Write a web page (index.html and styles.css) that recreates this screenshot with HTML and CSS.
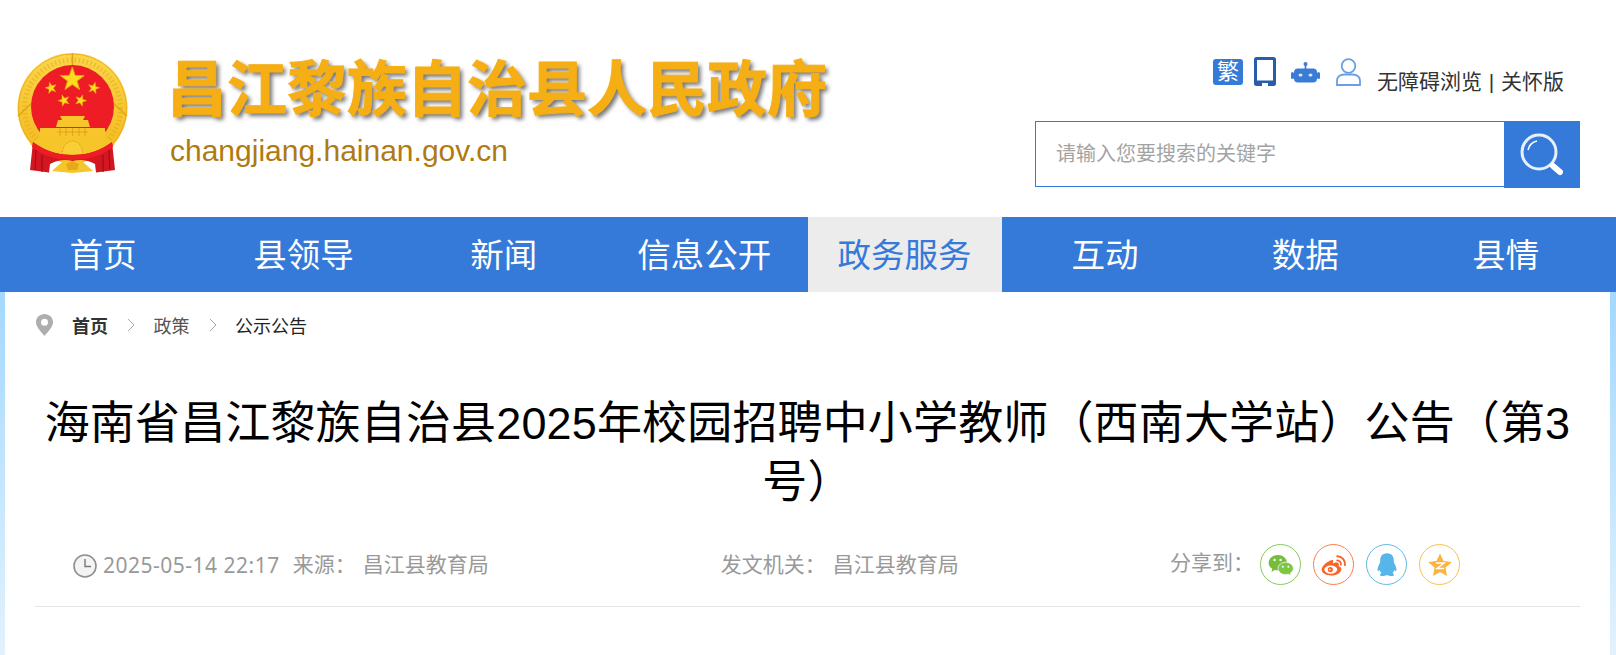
FILE: index.html
```html
<!DOCTYPE html>
<html lang="zh">
<head>
  <meta charset="UTF-8">
  <meta name="viewport" content="width=device-width, initial-scale=1.0">
  <title>昌江黎族自治县人民政府</title>
  <link rel="stylesheet" href="styles.css">
</head>
<body>
  <header class="header">
    <div class="brand">
      <svg class="emblem" viewBox="0 0 150 140" width="150" height="140">
        <defs>
          <linearGradient id="gold" x1="0" y1="0" x2="0" y2="1">
            <stop offset="0" stop-color="#fbd64a"/>
            <stop offset="1" stop-color="#f2b81e"/>
          </linearGradient>
          <polygon id="star" points="0,-1 .235,-.324 .951,-.309 .38,.124 .588,.809 0,.4 -.588,.809 -.38,.124 -.951,-.309 -.235,-.324"/>
        </defs>
        <circle cx="72.500" cy="68" r="55" fill="url(#gold)"/>
        <circle cx="72.500" cy="68" r="54" fill="none" stroke="#eaa914" stroke-width=".8"/>
        <circle cx="72.500" cy="68" r="48" fill="none" stroke="#e6a814" stroke-width="5" stroke-dasharray="1.500 2.500" opacity=".55"/>
        <path d="M18 76 L35 60 M127 76 L110 60 M72.500 13 V25" stroke="#e3a415" stroke-width="1.500"/>
        <circle cx="72.500" cy="66.500" r="41.500" fill="#ee1c25"/>
        <g fill="#fbdc1e" stroke="#e8a512" stroke-width=".08">
          <use href="#star" transform="translate(72.300 39.500) scale(12.500)"/>
          <use href="#star" transform="translate(51 48) rotate(-15) scale(6)"/>
          <use href="#star" transform="translate(93.700 48) rotate(15) scale(6)"/>
          <use href="#star" transform="translate(64 60.500) rotate(-20) scale(6)"/>
          <use href="#star" transform="translate(80.700 60.500) rotate(20) scale(6)"/>
        </g>
        <g fill="#f8c52c">
          <path d="M60 76 H85 L83 80 H88 L90 87 H56 L58 80 H62 Z"/>
          <rect x="40" y="88" width="65" height="9"/>
        </g>
        <path d="M57 92 H88 M60 88 v8 M66 88 v8 M72.500 88 v8 M79 88 v8 M85 88 v8" stroke="#dc9d12" stroke-width=".8"/>
        <path d="M40 97 H105 L115 104 Q96 122 72.500 122 Q49 122 30 104 Z" fill="#f6c52a"/>
        <path d="M62 115 a10.500 14 0 0 1 21 0 Z" fill="#f9cf38" stroke="#d9950f" stroke-width=".8" stroke-dasharray="2 1"/>
        <path d="M52 131 L63 121 H82 L93 131 L72.500 133 Z" fill="#f6c52a"/>
        <path d="M66 124 L72.500 121 L79 124 L77 130 H68 Z" fill="#e6a918"/>
        <path d="M33 102 Q50 115 72.500 115 Q95 115 112 102 L115 130 L96 132.500 L95 124 Q84 118 72.500 121 Q61 118 50 124 L49 132.500 L30 130 Z" fill="#d3161f"/>
        <path d="M33 102 Q50 115 72.500 115 Q95 115 112 102 L113 107 Q96 120 72.500 120 Q49 120 32 107 Z" fill="#ee1c25"/>
        <path d="M36 110 L35 130 M42 115 L42 132 M103 115 L103 132 M109 110 L110 130" stroke="#a50d16" stroke-width="1.200"/>
      </svg>
      <div class="site-name">
        <div class="site-title">昌江黎族自治县人民政府</div>
        <div class="site-domain">changjiang.hainan.gov.cn</div>
      </div>
    </div>
    <div class="tools">
      <div class="tool-row">
        <span class="fan">繁</span>
        <svg class="tool-tablet" viewBox="0 0 22 29" width="22" height="29">
          <path d="M2.500 0 H19.500 Q22 0 22 2.500 V26.500 Q22 29 19.500 29 H14 V26 H8 V29 H2.500 Q0 29 0 26.500 V2.500 Q0 0 2.500 0 Z M3 3 V23.500 H19 V3 Z" fill="#2a5da8" fill-rule="evenodd"/>
        </svg>
        <svg class="tool-robot" viewBox="0 0 29 21" width="29" height="21">
          <circle cx="14.500" cy="2" r="2" fill="#3a7bd5"/>
          <rect x="13.700" y="2" width="1.600" height="5" fill="#3a7bd5"/>
          <rect x="3" y="6.500" width="23" height="14" rx="4" fill="#3a7bd5"/>
          <rect x="0" y="10" width="3" height="7" rx="1.500" fill="#3a7bd5"/>
          <rect x="26" y="10" width="3" height="7" rx="1.500" fill="#3a7bd5"/>
          <ellipse cx="9.500" cy="13" rx="2" ry="1.500" fill="#dce8f8"/>
          <ellipse cx="19.500" cy="13" rx="2" ry="1.500" fill="#dce8f8"/>
        </svg>
        <svg class="tool-user" viewBox="0 0 25 28" width="25" height="28">
          <circle cx="12.500" cy="8" r="6.800" fill="none" stroke="#6a9fe6" stroke-width="1.800"/>
          <path d="M1 27 V23 Q1 17 8 16.500 H17 Q24 17 24 23 V27 Z" fill="none" stroke="#6a9fe6" stroke-width="1.800"/>
        </svg>
        <span class="tool-text">无障碍浏览 | 关怀版</span>
      </div>
      <div class="search">
        <div class="search-input">请输入您要搜索的关键字</div>
        <div class="search-btn">
          <svg viewBox="0 0 46 46" width="46" height="46">
            <circle cx="20" cy="20" r="17" fill="none" stroke="#e6effa" stroke-width="3"/>
            <path d="M9 18 A12 12 0 0 1 18 9" fill="none" stroke="#fff" stroke-width="1.500"/>
            <path d="M34 34 L41 40" stroke="#fff" stroke-width="6" stroke-linecap="round"/>
          </svg>
        </div>
      </div>
    </div>
  </header>

  <nav class="nav">
    <a>首页</a>
    <a>县领导</a>
    <a>新闻</a>
    <a>信息公开</a>
    <a class="active">政务服务</a>
    <a>互动</a>
    <a>数据</a>
    <a>县情</a>
  </nav>

  <main class="content">
    <div class="crumbs">
      <svg class="pin" viewBox="0 0 17 22" width="17" height="22">
        <path d="M8.500 0 C3.800 0 0 3.600 0 8.200 C0 13 5 17.500 8.500 22 C12 17.500 17 13 17 8.200 C17 3.600 13.200 0 8.500 0 Z M8.500 4.800 A3.500 3.500 0 1 1 8.500 11.800 A3.500 3.500 0 1 1 8.500 4.800 Z" fill="#aeaeae" fill-rule="evenodd"/>
      </svg>
      <b class="crumb-home">首页</b>
      <svg class="sep" viewBox="0 0 8 14" width="8" height="14"><path d="M1 1 L7 7 L1 13" fill="none" stroke="#a9a9a9" stroke-width="1"/></svg>
      <span class="crumb-mid">政策</span>
      <svg class="sep" viewBox="0 0 8 14" width="8" height="14"><path d="M1 1 L7 7 L1 13" fill="none" stroke="#a9a9a9" stroke-width="1"/></svg>
      <span class="crumb-cur">公示公告</span>
    </div>

    <h1 class="article-title">海南省昌江黎族自治县2025年校园招聘中小学教师（西南大学站）公告（第3号）</h1>

    <div class="meta">
      <svg class="clock" viewBox="0 0 24 24" width="24" height="24">
        <circle cx="12" cy="12" r="11" fill="#f4f4f4" stroke="#8f8f8f" stroke-width="1.600"/>
        <path d="M12 5 V12.500 H18" fill="none" stroke="#777" stroke-width="1.400"/>
      </svg>
      <span class="meta-date">2025-05-14 22:17</span>
      <span class="meta-src">来源：</span>
      <span class="meta-val">昌江县教育局</span>
      <span class="meta-org">发文机关：</span>
      <span class="meta-val">昌江县教育局</span>
      <div class="share">
        <span class="share-label">分享到：</span>
        <span class="share-icon wx">
          <svg viewBox="0 0 28 24" width="26" height="22">
            <path d="M10.500 1 C5 1 .5 4.800 .5 9.500 C.5 12.300 2 14.700 4.500 16.200 L3.500 19.500 L7.200 17.500 C8.500 17.900 9.500 18 10.500 18 C16 18 20.500 14.200 20.500 9.500 C20.500 4.800 16 1 10.500 1 Z" fill="#78bc3e"/>
            <path d="M19 9 C14.500 9 10.800 12 10.800 15.800 C10.800 19.600 14.500 22.500 19 22.500 C20 22.500 20.800 22.400 21.700 22.100 L25 23.800 L24.100 21 C26.200 19.700 27.500 17.900 27.500 15.800 C27.500 12 23.500 9 19 9 Z" fill="#7dc744" stroke="#fff" stroke-width=".8"/>
            <circle cx="7" cy="6.500" r="1.300" fill="#fff"/><circle cx="13.500" cy="6.500" r="1.300" fill="#fff"/>
            <circle cx="16" cy="14" r="1.100" fill="#fff"/><circle cx="22" cy="14" r="1.100" fill="#fff"/>
          </svg>
        </span>
        <span class="share-icon wb">
          <svg viewBox="0 0 28 24" width="26" height="22">
            <path d="M12 6.500 C7 7.500 .5 13 .5 17 C.5 21 5.500 23.500 11 23.500 C17 23.500 22 20 22 16.500 C22 14.500 20 13.700 19 13.400 C19.700 11.500 19.500 10 18 9.500 C16.500 9 14 9.800 12.500 10.500 C13.300 8 13.500 6.200 12 6.500 Z" fill="#fa6428"/>
            <ellipse cx="10.500" cy="17" rx="7" ry="4.500" fill="#fff"/>
            <circle cx="10" cy="17" r="2.800" fill="#fa6428"/>
            <circle cx="9.500" cy="17" r=".9" fill="#fff"/>
            <path d="M17.500 2.500 A8.500 8.500 0 0 1 26 12" fill="none" stroke="#fa6428" stroke-width="2.200" stroke-linecap="round"/>
            <path d="M17.500 7 A4 4 0 0 1 21.500 11.500" fill="none" stroke="#fa6428" stroke-width="2" stroke-linecap="round"/>
          </svg>
        </span>
        <span class="share-icon qq">
          <svg viewBox="0 0 22 26" width="20" height="24">
            <path d="M11 0 C5.500 0 3.500 4 3.500 8 V10 C2 13 .5 16 .5 18.500 C.5 20 1.500 20 3 18.500 C3.500 20 4 21 4.800 22 C3.500 22.600 3 23.400 3.500 24.200 C4.500 25.500 8.500 25.500 10 24.300 H12 C13.500 25.500 17.500 25.500 18.500 24.200 C19 23.400 18.500 22.600 17.200 22 C18 21 18.500 20 19 18.500 C20.500 20 21.500 20 21.500 18.500 C21.500 16 20 13 18.500 10 V8 C18.500 4 16.500 0 11 0 Z" fill="#56b6e9"/>
          </svg>
        </span>
        <span class="share-icon qz">
          <svg viewBox="0 0 24 24" width="24" height="24">
            <polygon points="12,0.500 15.500,8 23.800,9 17.500,14.500 19,23 12,19 5,23 6.500,14.500 0.200,9 8.500,8" fill="#fdb33d"/>
            <path d="M8 10 H16 L9 15.500 H16" fill="none" stroke="#fff" stroke-width="1.500"/>
          </svg>
        </span>
      </div>
    </div>
  </main>
</body>
</html>
```

FILE: styles.css
```css
html, body {
  height: 100%;
}

body {
  margin: 0;
  overflow: hidden;
  font-family: "Liberation Sans", "Noto Sans CJK SC", sans-serif;
  background: linear-gradient(180deg, #a3d8ff 292px, #e2f2fd 655px);
}

/* header */
.header {
  height: 217px;
  background: #fff;
  display: flex;
  justify-content: space-between;
}

.brand {
  display: flex;
  align-items: flex-start;
}

.emblem {
  margin-top: 40px;
}

.site-name {
  margin-left: 22px;
  padding-top: 52px;
}

.site-title {
  margin-left: -5px;
  font-size: 60px;
  line-height: 78px;
  font-weight: bold;
  color: #f6ae15;
  -webkit-text-stroke: 1px #f6ae15;
  text-shadow: 3px 3px 4px rgba(0, 0, 0, 0.55);
  white-space: nowrap;
}

.site-domain {
  margin-top: 3px;
  margin-left: -2px;
  font-size: 30px;
  line-height: 36px;
  color: #b07a10;
}

.tools {
  width: 545px;
  margin-right: 36px;
  padding-top: 57px;
}

.tool-row {
  display: flex;
  align-items: flex-start;
  padding-left: 178px;
  height: 64px;
}

.fan {
  width: 30px;
  height: 26px;
  margin-top: 2px;
  background: #3579d9;
  border-radius: 3px;
  color: #fff;
  font-size: 22px;
  line-height: 26px;
  text-align: center;
}

.tool-tablet {
  margin-left: 11px;
}

.tool-robot {
  margin-left: 15px;
  margin-top: 5px;
}

.tool-user {
  margin-left: 16px;
  margin-top: 1px;
}

.tool-text {
  margin-left: 16px;
  margin-top: 10px;
  font-size: 21px;
  line-height: 30px;
  word-spacing: 1px;
  color: #333;
  white-space: nowrap;
}

.search {
  display: flex;
  height: 67px;
}

.search-input {
  flex: 1;
  box-sizing: border-box;
  height: 66px;
  border: 1px solid #3579d9;
  border-right: 0;
  padding-left: 20px;
  font-size: 20px;
  line-height: 65px;
  color: #a3a3a3;
}

.search-btn {
  width: 76px;
  background: #3579d9;
  display: flex;
  align-items: center;
  justify-content: center;
}

/* nav */
.nav {
  height: 75px;
  background: #3579d9;
  display: flex;
  gap: 6.4px;
  padding-left: 6px;
}

.nav a {
  width: 194px;
  font-size: 33.500px;
  line-height: 77px;
  text-align: center;
  color: #fff;
}

.nav a.active {
  height: 75px;
  background: #ececec;
  color: #3579d9;
}

/* article */
.content {
  margin: 0 6px 0 5px;
  padding: 0 30px;
  height: 363px;
  background: #fff;
}

.crumbs {
  display: flex;
  align-items: center;
  height: 66px;
  font-size: 18px;
}

.pin {
  margin-left: 1px;
}

.crumb-home {
  margin-left: 19px;
  color: #333;
}

.sep {
  margin: 0 18.500px 0 19px;
}

.crumb-mid {
  color: #555;
}

.crumb-cur {
  color: #222;
}

.article-title {
  margin: 36px 0 0;
  font-size: 45px;
  line-height: 59px;
  letter-spacing: 0.15px;
  font-weight: normal;
  text-align: center;
  color: #000;
}

.meta {
  display: flex;
  align-items: flex-start;
  height: 56px;
  margin-top: 38px;
  padding: 0 108px 0 38px;
  border-bottom: 1px solid #e5e5e5;
  font-size: 21px;
  line-height: 30px;
  color: #999;
  white-space: nowrap;
}

.clock {
  margin-right: 6px;
  margin-top: 4px;
}

.meta-date {
  font-family: "Noto Sans", "Liberation Sans", sans-serif;
  letter-spacing: 0.5px;
}

.meta-src {
  margin-left: 13px;
  margin-right: 7px;
}

.meta-org {
  margin-left: 232px;
  margin-right: 7px;
}

.share {
  display: flex;
  align-items: flex-start;
  margin-left: auto;
  margin-top: -6px;
}

.share-label {
  width: 90px;
  margin-top: 4px;
}

.share-icon {
  width: 41px;
  height: 41px;
  margin-right: 12px;
  box-sizing: border-box;
  border: 1px solid #ccc;
  border-radius: 50%;
  display: flex;
  align-items: center;
  justify-content: center;
}

.wx { border-color: #86c95a; }
.wb { border-color: #fb7f4c; }
.qq { border-color: #5cb8e8; }
.qz { border-color: #fcc04f; }
```
